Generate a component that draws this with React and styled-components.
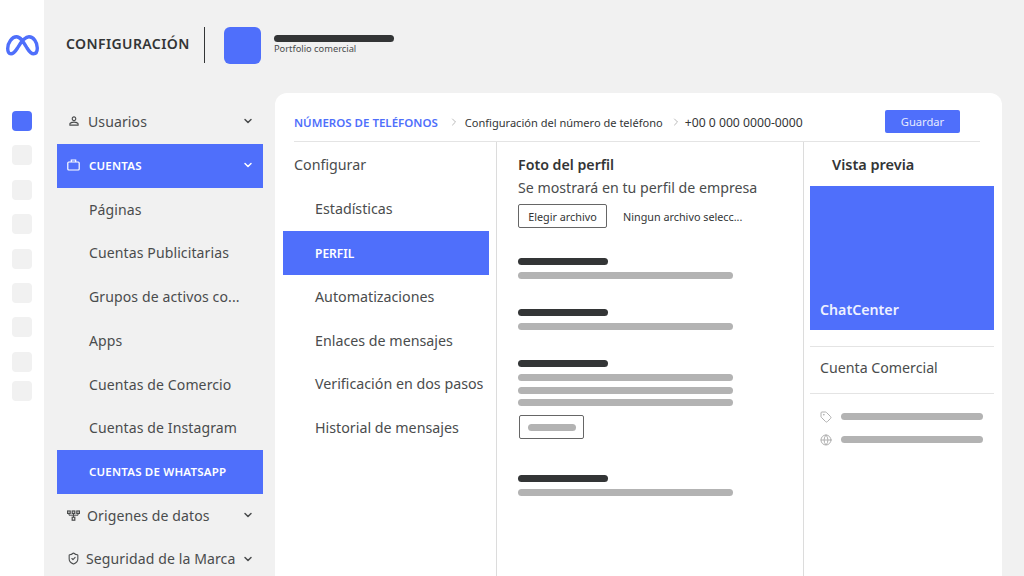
import React from "react"
import styled, { createGlobalStyle } from "styled-components"
import { ChevronDown, ChevronRight, Globe, ShieldCheck, Tag } from "lucide-react"
import { MdPersonOutline } from "react-icons/md"

const BLUE = "#4f6ffb"
const INK = "#4a4c4d"
const DARK = "#333536"
const GRAY = "#b3b3b3"
const LINE = "#e4e4e4"

const Global = createGlobalStyle`
  html, body { margin: 0; padding: 0; height: 576px; overflow: hidden; background: #f1f1f1; }
  body { font-family: "Noto Sans", "Liberation Sans", sans-serif; color: ${INK}; }
  * { box-sizing: border-box; }
`

const Page = styled.div`
  display: flex;
  width: 1024px;
  height: 576px;
  overflow: hidden;
`

const Rail = styled.nav`
  width: 44px;
  flex: none;
  background: #fff;
  padding: 35px 0 0 6px;
`

const RailSquares = styled.div`
  display: flex;
  flex-direction: column;
  gap: 14.4px;
  margin: 50px 0 0 6px;
`

const RailSquare = styled.div`
  width: 20px;
  height: 20px;
  border-radius: 4px;
  background: ${p => (p.$active ? BLUE : "#f1f1f1")};
  &:last-child { margin-top: -5px; }
`

const Main = styled.div`
  flex: 1;
  display: flex;
  flex-direction: column;
  min-width: 0;
`

const Header = styled.header`
  height: 93px;
  flex: none;
  display: flex;
  align-items: flex-start;
  padding: 27px 0 0 22px;
`

const PageTitle = styled.h1`
  margin: 0;
  width: 138px;
  height: 36px;
  line-height: 34px;
  font-size: 14px;
  font-weight: 600;
  letter-spacing: 0.4px;
  color: ${DARK};
  white-space: nowrap;
`

const Divider = styled.div`
  width: 1px;
  height: 36px;
  background: ${DARK};
`

const Avatar = styled.div`
  width: 37px;
  height: 37px;
  margin: 0 13px 0 19px;
  border-radius: 6px;
  background: ${BLUE};
`

const Portfolio = styled.div`
  padding-top: 8px;
  font-size: 9.3px;
  line-height: 14px;
  color: ${INK};
`

const Bar = styled.div`
  width: ${p => p.$w}px;
  height: 7px;
  flex: none;
  border-radius: 4px;
  background: ${p => (p.$dark ? DARK : GRAY)};
`

const Body = styled.div`
  flex: 1;
  display: flex;
  min-height: 0;
  padding-left: 13px;
`

const Sidebar = styled.aside`
  width: 206px;
  flex: none;
  padding-top: 7px;
  margin-right: 12px;
`

const SideRow = styled.div`
  height: 43.75px;
  display: flex;
  align-items: center;
  padding: ${p => (p.$inset ? "0 0 0.5px 32px" : "0 9px 1px 10px")};
  background: ${p => (p.$active ? BLUE : "transparent")};
  color: ${p => (p.$active ? "#fff" : INK)};
  font-size: ${p => (p.$active ? "11.5px" : "14.05px")};
  font-weight: ${p => (p.$active ? 600 : 400)};
  letter-spacing: ${p => (p.$active ? "0.2px" : "0.1px")};
  white-space: nowrap;
`

const SideIcon = styled.span`
  width: ${p => p.$w || 21}px;
  flex: none;
  display: flex;
  align-items: center;
`

const SideLabel = styled.span`
  flex: 1;
  min-width: 0;
`

const Panel = styled.section`
  width: 727px;
  flex: none;
  display: flex;
  flex-direction: column;
  background: #fff;
  border-radius: 12px 12px 0 0;
`

const TopBar = styled.div`
  height: 49px;
  flex: none;
  display: flex;
  align-items: center;
  margin: 0 22px 0 19px;
  padding-top: 10px;
  border-bottom: 1px solid ${LINE};
  white-space: nowrap;
`

const Crumb = styled.span`
  color: ${p => (p.$active ? BLUE : DARK)};
  font-size: ${p => p.$size}px;
  font-weight: ${p => (p.$active ? 600 : 400)};
`

const CrumbArrow = styled.span`
  display: flex;
  width: ${p => p.$w}px;
  padding-left: ${p => p.$pad}px;
  color: #b9b9b9;
`

const SaveButton = styled.button`
  width: 75px;
  height: 23px;
  margin: -2px 20px 0 auto;
  border: 0;
  border-radius: 2px;
  background: ${BLUE};
  color: #e6eaff;
  font: 400 11.2px "Noto Sans", sans-serif;
`

const Columns = styled.div`
  flex: 1;
  display: grid;
  grid-template-columns: 222px 307px 1fr;
  min-height: 0;
`

const SubNav = styled.div`
  padding: 2px 7px 0 8px;
  border-right: 1px solid #dcdcdc;
`

const SubRow = styled.div`
  height: ${p => (p.$active ? 44 : 43.6)}px;
  display: flex;
  align-items: center;
  padding-left: ${p => (p.$root ? 11 : 32)}px;
  padding-bottom: ${p => (p.$active ? 0 : p.$root ? 2 : 1)}px;
  background: ${p => (p.$active ? BLUE : "transparent")};
  color: ${p => (p.$active ? "#fff" : INK)};
  font-size: ${p => (p.$active ? "12px" : "14.25px")};
  font-weight: ${p => (p.$active ? 600 : 400)};
  white-space: nowrap;
`

const Form = styled.div`
  padding: 13px 0 0 21px;
  border-right: 1px solid #dcdcdc;
`

const FormTitle = styled.div`
  font-size: 14.2px;
  line-height: 20px;
  font-weight: 600;
  color: ${DARK};
`

const FormHint = styled.div`
  margin-top: 3px;
  font-size: 14.2px;
  line-height: 20px;
  white-space: nowrap;
`

const FileRow = styled.div`
  display: flex;
  align-items: center;
  gap: 16px;
  margin: 6px 0 30px;
  font-size: 10.8px;
  color: ${DARK};
`

const FileButton = styled.div`
  width: 89px;
  height: 24px;
  display: flex;
  align-items: center;
  justify-content: center;
  border: 1px solid #666;
  border-radius: 2px;
`

const Field = styled.div`
  display: flex;
  flex-direction: column;
  gap: 7px;
  margin-bottom: ${p => p.$mb || 30}px;
`

const Lines = styled.div`
  display: flex;
  flex-direction: column;
  gap: 5.5px;
`

const BarButton = styled.div`
  width: 65px;
  height: 24px;
  display: flex;
  align-items: center;
  justify-content: center;
  border: 1.5px solid #666;
  border-radius: 2px;
  margin: 2px 0 0 1px;
`

const Preview = styled.div`
  padding: 12px 8px 0 6px;
`

const PreviewTitle = styled.div`
  padding-left: 22px;
  font-size: 14.5px;
  line-height: 20px;
  font-weight: 600;
  color: ${DARK};
  margin-bottom: 12px;
`

const PreviewCard = styled.div`
  height: 144px;
  display: flex;
  align-items: flex-end;
  padding: 0 0 11px 10px;
  background: ${BLUE};
  color: #eef1ff;
  font-size: 14.2px;
  font-weight: 600;
`

const AccountType = styled.div`
  height: 48px;
  margin-top: 16px;
  display: flex;
  align-items: center;
  padding: 0 0 5px 10px;
  border-top: 1px solid ${LINE};
  border-bottom: 1px solid ${LINE};
  font-size: 14.2px;
`

const MetaRow = styled.div`
  display: flex;
  align-items: center;
  gap: 9px;
  height: 7px;
  padding-left: 10px;
  margin-top: ${p => p.$mt}px;
  color: #b0b0b0;
`

const MetaLogo = () => (
  <svg width="33" height="21" viewBox="0 0 33 21" fill="none" stroke={BLUE} strokeWidth="3.4" strokeLinejoin="round">
    <path d="M5 18.8C2.8 18.8 1.7 16.5 1.7 13.5C1.7 7.5 6 1.8 10.5 1.8C14.5 1.8 17 6 21 13C23.5 17 25 18.8 27.5 18.8C30 18.8 31.3 16.5 31.3 13C31.3 7 27.5 1.8 23 1.8C18.5 1.8 15 7 11.5 13C9 17 7.5 18.8 5 18.8Z" />
  </svg>
)

const CaseIcon = () => (
  <svg width="13" height="12" viewBox="0 0 13 12" fill="none" stroke="currentColor" strokeWidth="1.2">
    <rect x="0.8" y="3" width="11.4" height="8" rx="1" />
    <path d="M4.3 3V1h4.4v2" />
  </svg>
)

const SourcesIcon = () => (
  <svg width="13" height="11" viewBox="0 0 13 11" fill="none" stroke="currentColor" strokeWidth="1.2">
    <rect x="0.6" y="1" width="2.6" height="2.4" />
    <rect x="5.2" y="1" width="2.6" height="2.4" />
    <rect x="9.8" y="1" width="2.6" height="2.4" />
    <rect x="5.2" y="7.2" width="2.6" height="3" />
    <path d="M2 3.4v1.8h9V3.4M6.5 3.4v3.8" strokeWidth="1" />
  </svg>
)

const Chevron = () => <ChevronDown size={12} strokeWidth={3} />

const App = () => (
  <Page>
    <Global />
    <Rail>
      <MetaLogo />
      <RailSquares>
        <RailSquare $active />
        {[...Array(8)].map((_, i) => <RailSquare key={i} />)}
      </RailSquares>
    </Rail>
    <Main>
      <Header>
        <PageTitle>CONFIGURACIÓN</PageTitle>
        <Divider />
        <Avatar />
        <Portfolio>
          <Bar $dark $w={120} />
          <div>Portfolio comercial</div>
        </Portfolio>
      </Header>
      <Body>
        <Sidebar>
          <SideRow>
            <SideIcon><MdPersonOutline size={14} /></SideIcon>
            <SideLabel>Usuarios</SideLabel>
            <Chevron />
          </SideRow>
          <SideRow $active>
            <SideIcon $w={22}><CaseIcon /></SideIcon>
            <SideLabel>CUENTAS</SideLabel>
            <Chevron />
          </SideRow>
          <SideRow $inset>Páginas</SideRow>
          <SideRow $inset>Cuentas Publicitarias</SideRow>
          <SideRow $inset>Grupos de activos co...</SideRow>
          <SideRow $inset>Apps</SideRow>
          <SideRow $inset>Cuentas de Comercio</SideRow>
          <SideRow $inset>Cuentas de Instagram</SideRow>
          <SideRow $inset $active>CUENTAS DE WHATSAPP</SideRow>
          <SideRow>
            <SideIcon $w={20}><SourcesIcon /></SideIcon>
            <SideLabel>Origenes de datos</SideLabel>
            <Chevron />
          </SideRow>
          <SideRow>
            <SideIcon $w={19}><ShieldCheck size={13} strokeWidth={2} /></SideIcon>
            <SideLabel>Seguridad de la Marca</SideLabel>
            <Chevron />
          </SideRow>
        </Sidebar>
        <Panel>
          <TopBar>
            <Crumb $active $size={11.5}>NÚMEROS DE TELÉFONOS</Crumb>
            <CrumbArrow $w={27} $pad={10}><ChevronRight size={12} /></CrumbArrow>
            <Crumb $size={11.05}>Configuración del número de teléfono</Crumb>
            <CrumbArrow $w={22} $pad={7}><ChevronRight size={12} /></CrumbArrow>
            <Crumb $size={12.2}>+00 0 000 0000-0000</Crumb>
            <SaveButton>Guardar</SaveButton>
          </TopBar>
          <Columns>
            <SubNav>
              <SubRow $root>Configurar</SubRow>
              <SubRow>Estadísticas</SubRow>
              <SubRow $active>PERFIL</SubRow>
              <SubRow>Automatizaciones</SubRow>
              <SubRow>Enlaces de mensajes</SubRow>
              <SubRow>Verificación en dos pasos</SubRow>
              <SubRow>Historial de mensajes</SubRow>
            </SubNav>
            <Form>
              <FormTitle>Foto del perfil</FormTitle>
              <FormHint>Se mostrará en tu perfil de empresa</FormHint>
              <FileRow>
                <FileButton>Elegir archivo</FileButton>
                <span>Ningun archivo selecc...</span>
              </FileRow>
              <Field>
                <Bar $dark $w={90} />
                <Bar $w={215} />
              </Field>
              <Field>
                <Bar $dark $w={90} />
                <Bar $w={215} />
              </Field>
              <Field $mb={36}>
                <Bar $dark $w={90} />
                <Lines>
                  <Bar $w={215} />
                  <Bar $w={215} />
                  <Bar $w={215} />
                </Lines>
                <BarButton><Bar $w={48} /></BarButton>
              </Field>
              <Field>
                <Bar $dark $w={90} />
                <Bar $w={215} />
              </Field>
            </Form>
            <Preview>
              <PreviewTitle>Vista previa</PreviewTitle>
              <PreviewCard>ChatCenter</PreviewCard>
              <AccountType>Cuenta Comercial</AccountType>
              <MetaRow $mt={19}>
                <Tag size={12} />
                <Bar $w={142} />
              </MetaRow>
              <MetaRow $mt={16}>
                <Globe size={12} />
                <Bar $w={142} />
              </MetaRow>
            </Preview>
          </Columns>
        </Panel>
      </Body>
    </Main>
  </Page>
)

export default App
